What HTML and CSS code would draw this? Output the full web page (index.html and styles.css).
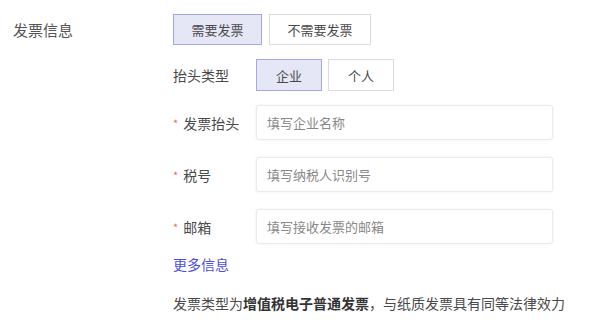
FILE: index.html
```html
<!DOCTYPE html>
<html lang="zh-CN">
<head>
<meta charset="utf-8">
<title>发票信息</title>
<link rel="stylesheet" href="styles.css">
</head>
<body>
<div class="invoice">
  <div class="invoice-title">发票信息</div>
  <div class="invoice-body">
    <div class="choice">
      <button class="opt opt-need active">需要发票</button>
      <button class="opt opt-need">不需要发票</button>
    </div>
    <div class="type-row">
      <span class="type-label">抬头类型</span>
      <button class="opt opt-type active">企业</button>
      <button class="opt opt-type">个人</button>
    </div>
    <div class="fields">
      <div class="field">
        <label class="field-label"><i>*</i>发票抬头</label>
        <input class="field-input" type="text" placeholder="填写企业名称">
      </div>
      <div class="field">
        <label class="field-label"><i>*</i>税号</label>
        <input class="field-input" type="text" placeholder="填写纳税人识别号">
      </div>
      <div class="field">
        <label class="field-label"><i>*</i>邮箱</label>
        <input class="field-input" type="text" placeholder="填写接收发票的邮箱">
      </div>
    </div>
    <a class="more" href="#">更多信息</a>
    <p class="note">发票类型为<b>增值税电子普通发票</b>，与纸质发票具有同等法律效力</p>
  </div>
</div>
</body>
</html>
```
FILE: styles.css
```css
body
{
	margin:0;
	background:#fff;
	font-family:"Noto Sans CJK SC","Noto Sans",sans-serif;
	color:#4a4a4a;
}
.invoice
{
	display:flex;
	padding:14px 0 0 13px;
}
.invoice-title
{
	width:160px;
	font-size:15px;
	line-height:31px;
	color:#555;
}
.invoice-body
{
	display:flex;
	flex-direction:column;
}
.choice
{
	display:flex;
	gap:7px;
}
.opt
{
	font-family:inherit;
	font-size:13px;
	color:#4a4a4a;
	background:#fff;
	border:1px solid #dcdcdc;
	padding:0;
	cursor:pointer;
}
.opt.active
{
	background:#e5e6f6;
	border-color:#a3a6e8;
}
.opt-need
{
	width:89px;
	height:31px;
}
.opt-need + .opt-need
{
	width:102px;
}
.type-row
{
	display:flex;
	align-items:center;
	gap:6px;
	margin-top:14px;
}
.type-label
{
	width:77px;
	font-size:14px;
}
.opt-type
{
	width:66px;
	height:32px;
}
.fields
{
	display:flex;
	flex-direction:column;
	gap:17px;
	margin-top:14px;
}
.field
{
	display:flex;
	align-items:center;
}
.field-label
{
	width:83px;
	font-size:14px;
	color:#4a4a4a;
}
.field-label i
{
	font-style:normal;
	color:#f06a5a;
	font-size:11px;
	margin-right:5px;
	position:relative;
	top:-1px;
}
.field-input
{
	box-sizing:border-box;
	width:297px;
	height:35px;
	padding:0 10px;
	font-family:inherit;
	font-size:13px;
	color:#444;
	border:1px solid #ebebeb;
	border-radius:3px;
	box-shadow:0 0 3px rgba(0,0,0,0.07);
	outline:none;
}
.field-input::placeholder
{
	color:#888;
}
.more
{
	margin-top:10px;
	font-size:14px;
	line-height:20px;
	color:#4d4de0;
	text-decoration:none;
	align-self:flex-start;
}
.note
{
	margin:19px 0 0;
	font-size:14px;
	line-height:20px;
	color:#4a4a4a;
}
.note b
{
	color:#333;
}
```
